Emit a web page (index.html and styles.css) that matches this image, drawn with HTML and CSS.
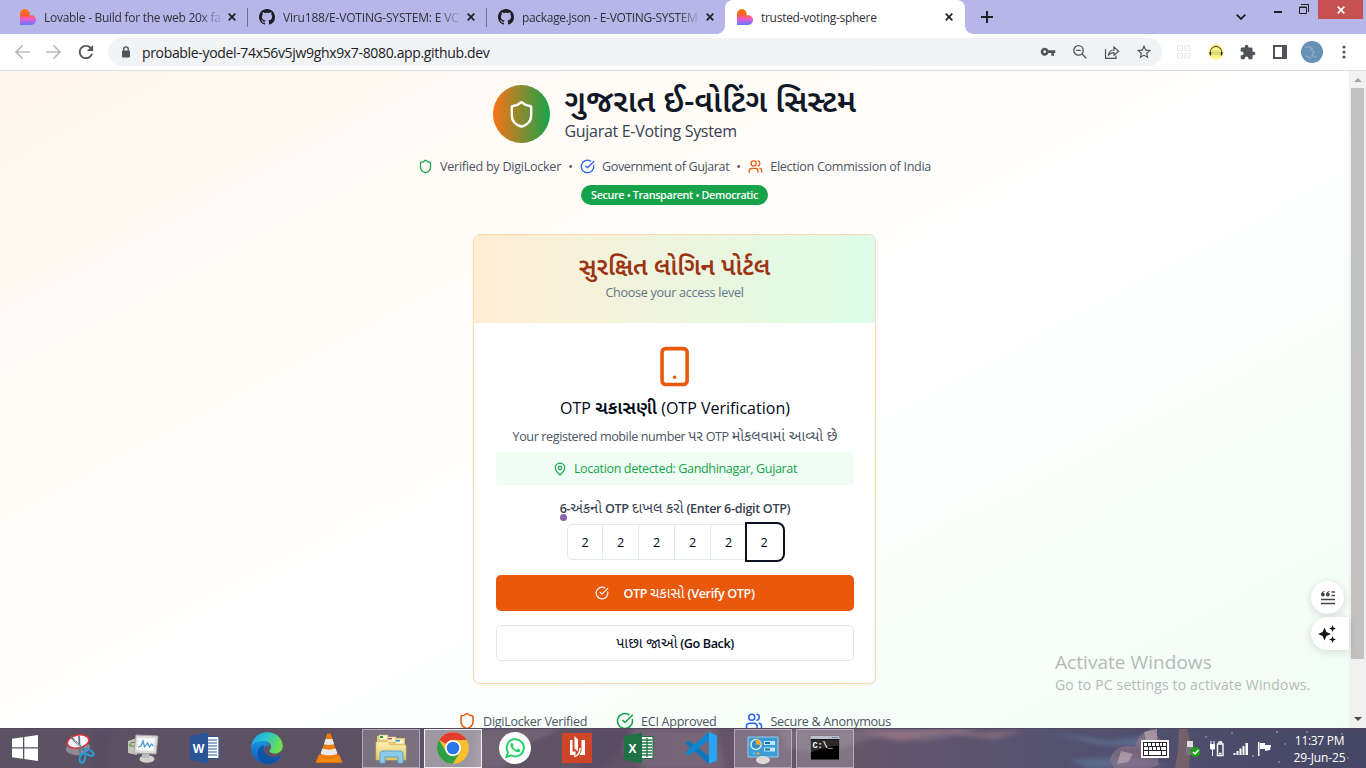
FILE: index.html
```html
<!DOCTYPE html>
<html lang="en">
<head>
<meta charset="utf-8">
<title>trusted-voting-sphere</title>
<link rel="stylesheet" href="styles.css">
</head>
<body>
<svg class="defs" width="0" height="0">
  <defs>
    <linearGradient id="lov" x1="0" y1="0" x2="0" y2="1"><stop offset="0" stop-color="#ff7a00"/><stop offset=".4" stop-color="#ff5a3c"/><stop offset=".62" stop-color="#f05ad0"/><stop offset="1" stop-color="#5a78ff"/></linearGradient>
    <linearGradient id="edgeA" x1="0" y1="0" x2="1" y2=".3"><stop offset="0" stop-color="#1d9be8"/><stop offset=".5" stop-color="#2bc3d2"/><stop offset="1" stop-color="#6be04e"/></linearGradient>
    <linearGradient id="edgeB" x1="0" y1="0" x2="0" y2="1"><stop offset="0" stop-color="#1b95e0"/><stop offset="1" stop-color="#0a5cc0"/></linearGradient>
    <linearGradient id="folder" x1="0" y1="0" x2="0" y2="1"><stop offset="0" stop-color="#fdf3b4"/><stop offset="1" stop-color="#e2c263"/></linearGradient>
  </defs>
  <symbol id="heart" viewBox="0 0 16 16"><path fill="url(#lov)" d="M0 4.8a4.8 4.8 0 0 1 9.6 0v1.4h1.6a4.9 4.9 0 0 1 0 9.8H0z"/></symbol>
  <symbol id="github" viewBox="0 0 16 16"><path fill="#1b1f23" d="M8 0C3.58 0 0 3.58 0 8c0 3.54 2.29 6.53 5.47 7.59.4.07.55-.17.55-.38 0-.19-.01-.82-.01-1.49-2.01.37-2.53-.49-2.69-.94-.09-.23-.48-.94-.82-1.13-.28-.15-.68-.52-.01-.53.63-.01 1.08.58 1.23.82.72 1.21 1.87.87 2.33.66.07-.52.28-.87.51-1.07-1.78-.2-3.64-.89-3.64-3.95 0-.87.31-1.59.82-2.15-.08-.2-.36-1.02.08-2.12 0 0 .67-.21 2.2.82.64-.18 1.32-.27 2-.27.68 0 1.36.09 2 .27 1.53-1.04 2.2-.82 2.2-.82.44 1.1.16 1.92.08 2.12.51.56.82 1.27.82 2.15 0 3.07-1.87 3.75-3.65 3.95.29.25.54.73.54 1.48 0 1.07-.01 1.93-.01 2.2 0 .21.15.46.55.38A8.013 8.013 0 0016 8c0-4.42-3.58-8-8-8z"/></symbol>
  <symbol id="x" viewBox="0 0 8 8"><path d="M.7.7l6.6 6.6M7.3.7L.7 7.3" stroke="currentColor" stroke-width="1.7" fill="none"/></symbol>
  <symbol id="shield" viewBox="0 0 24 24"><path d="M20 13c0 5-3.5 7.5-7.66 8.95a1 1 0 0 1-.67-.01C7.5 20.5 4 18 4 13V6a1 1 0 0 1 1-1c2 0 4.5-1.2 6.24-2.72a1.17 1.17 0 0 1 1.52 0C14.51 3.81 17 5 19 5a1 1 0 0 1 1 1z"/></symbol>
  <symbol id="check" viewBox="0 0 24 24"><path d="M21.801 10A10 10 0 1 1 17 3.335M9 11l3 3L22 4"/></symbol>
  <symbol id="users" viewBox="0 0 24 24"><path d="M16 21v-2a4 4 0 0 0-4-4H6a4 4 0 0 0-4 4v2M22 21v-2a4 4 0 0 0-3-3.87M16 3.13a4 4 0 0 1 0 7.75"/><circle cx="9" cy="7" r="4"/></symbol>
</svg>

<div class="screen">
  <div class="tabs">
    <div class="tab"><svg class="fav"><use href="#heart"/></svg><span class="ttl t1">Lovable - Build for the web 20x fa</span><svg class="cls"><use href="#x"/></svg></div>
    <div class="tab sep"><svg class="fav"><use href="#github"/></svg><span class="ttl t2">Viru188/E-VOTING-SYSTEM: E VC</span><svg class="cls"><use href="#x"/></svg></div>
    <div class="tab sep"><svg class="fav"><use href="#github"/></svg><span class="ttl t3">package.json - E-VOTING-SYSTEM</span><svg class="cls"><use href="#x"/></svg></div>
    <div class="tab active"><svg class="fav"><use href="#heart"/></svg><span class="ttl t4">trusted-voting-sphere</span><svg class="cls"><use href="#x"/></svg></div>
    <svg class="plus" viewBox="0 0 12 12"><path d="M6 0v12M0 6h12" stroke="#202124" stroke-width="2"/></svg>
    <div class="winctl">
      <svg class="chev" viewBox="0 0 10 6"><path d="M.7.7L5 5 9.300.7" fill="none" stroke="#202124" stroke-width="1.8"/></svg>
      <i class="min"></i>
      <svg class="max" viewBox="0 0 10 10"><path d="M.5 3h7v6.500h-7zM.5 3.500h7M2 .5h7.500V8" fill="none" stroke="#202124"/></svg>
      <div class="close"><svg viewBox="0 0 8 8"><use href="#x"/></svg></div>
    </div>
  </div>

  <div class="toolbar">
    <div class="nav">
      <svg viewBox="2 2 20 20" fill="#b8babd"><path d="M22 11H6.800l6.600-6.600L12 3l-9 9 9 9 1.400-1.400L6.800 13H22z"/></svg>
      <svg viewBox="2 2 20 20" fill="#b8babd"><path d="M2 11h15.200l-6.600-6.600L12 3l9 9-9 9-1.400-1.400 6.600-6.600H2z"/></svg>
      <svg viewBox="3 3 18 18" fill="#505357" class="reload"><path d="M17.650 6.350C16.200 4.900 14.210 4 12 4c-4.420 0-7.990 3.580-7.990 8s3.570 8 7.990 8c3.730 0 6.840-2.550 7.730-6h-2.080c-.82 2.330-3.040 4-5.650 4-3.310 0-6-2.690-6-6s2.690-6 6-6c1.660 0 3.140.69 4.220 1.780L13 11h7V4l-2.350 2.350z"/></svg>
    </div>
    <div class="omni">
      <svg class="lock" viewBox="0 0 10 12"><rect x="1" y="4.500" width="8" height="7" rx="1" fill="#505357"/><path d="M2.800 5V3a2.200 2.200 0 0 1 4.400 0v2" fill="none" stroke="#505357" stroke-width="1.300"/></svg>
      <span class="url">probable-yodel-74x56v5jw9ghx9x7-8080.app.github.dev</span>
      <div class="acts">
        <svg viewBox="0 0 24 24"><path d="M12.650 10C11.830 7.670 9.610 6 7 6c-3.310 0-6 2.690-6 6s2.690 6 6 6c2.610 0 4.830-1.670 5.650-4H17v4h4v-4h2v-4H12.650zM7 14c-1.100 0-2-.9-2-2s.9-2 2-2 2 .9 2 2-.9 2-2 2z" transform="translate(0 -.5)"/></svg>
        <svg viewBox="0 0 16 16"><path d="M6.500 1.700a4.700 4.700 0 1 0 0 9.400 4.700 4.700 0 0 0 0-9.400zM10 10l4.300 4.300M4.300 6.400h4.400" fill="none" stroke="#505357" stroke-width="1.300"/></svg>
        <svg viewBox="0 0 16 16"><path d="M1.500 5v9.300H12V11.500M4.500 11c.5-3.500 2.500-5 5.500-5V3l4.700 4.300L10 11.300V8.700C7.500 8.700 6 9.500 4.500 11z" fill="none" stroke="#505357" stroke-width="1.200"/></svg>
        <svg viewBox="1 1 22 22"><path d="M22 9.240l-7.190-.62L12 2 9.190 8.630 2 9.240l5.460 4.730L5.820 21 12 17.270 18.180 21l-1.630-7.030L22 9.240zM12 15.400l-3.760 2.270 1-4.280-3.320-2.880 4.380-.38L12 6.100l1.710 4.040 4.380.38-3.320 2.880 1 4.280L12 15.400z"/></svg>
      </div>
    </div>
    <div class="exts">
      <svg viewBox="0 0 16 16" fill="none" stroke="#e6e6e6" stroke-width="1"><path d="M1.500 1.500h5v5h-5zM9 1.500h5v5H9zM1.500 9h5v5h-5zM9 9h5v5H9zM3 3l2 2M12.500 3l-2 2M3 12.500l2-2M12.500 12.500l-2-2"/></svg>
      <svg viewBox="0 0 16 16"><circle cx="8" cy="8" r="7.800" fill="#fbf48c"/><path d="M2.500 9.500V7.500a5.500 5 0 0 1 11 0v2" fill="none" stroke="#3d3b2a"/><path d="M1.200 8h2v3.500h-1.200zM12.800 8h2l-.8 3.500h-1.200z" fill="#222"/><path d="M4 8h8M4 10h8" stroke="#b5a94d" stroke-dasharray="1.500 .7"/></svg>
      <svg viewBox="1 0 23 23" fill="#505357"><path d="M20.500 11H19V7c0-1.100-.9-2-2-2h-4V3.500C13 2.120 11.880 1 10.500 1S8 2.120 8 3.500V5H4c-1.100 0-1.990.9-1.990 2v3.800H3.500c1.490 0 2.700 1.210 2.700 2.700s-1.210 2.700-2.700 2.700H2V20c0 1.100.9 2 2 2h3.800v-1.500c0-1.490 1.210-2.700 2.700-2.700 1.490 0 2.700 1.210 2.700 2.700V22H17c1.100 0 2-.9 2-2v-4h1.500c1.380 0 2.500-1.120 2.500-2.500S21.880 11 20.500 11z"/></svg>
      <svg viewBox="0 0 16 16"><path d="M2 2h12v12H2z" fill="none" stroke="#505357" stroke-width="2"/><path d="M10 2h4v12h-4z" fill="#505357"/></svg>
      <svg viewBox="0 0 22 22" class="ava"><circle cx="11" cy="11" r="11" fill="#6890b4"/><path d="M4 6c3-1 5 0 8 2M9 8l4 3-2 4 5 1M5 15c2 0 3 1 5 3" stroke="#a9c4dc" stroke-width="1.500" fill="none" opacity=".5"/></svg>
      <svg viewBox="0 0 16 16" fill="#505357"><circle cx="8" cy="3" r="1.600"/><circle cx="8" cy="8" r="1.600"/><circle cx="8" cy="13" r="1.600"/></svg>
    </div>
  </div>

  <div class="view">
    <main class="page">
      <header class="brand">
        <div class="logo"><svg class="ln"><use href="#shield"/></svg></div>
        <div><h1>ગુજરાત ઈ-વોટિંગ સિસ્ટમ</h1><p>Gujarat E-Voting System</p></div>
      </header>
      <div class="meta">
        <svg class="ln green"><use href="#shield"/></svg><span class="m1">Verified by DigiLocker</span><b>•</b>
        <svg class="ln blue"><use href="#check"/></svg><span class="m2">Government of Gujarat</span><b>•</b>
        <svg class="ln orange"><use href="#users"/></svg><span class="m3">Election Commission of India</span>
      </div>
      <div class="badge"><span>Secure • Transparent • Democratic</span></div>

      <section class="card">
        <div class="chead"><h2>સુરક્ષિત લોગિન પોર્ટલ</h2><p>Choose your access level</p></div>
        <div class="cbody">
          <svg class="phone ln" viewBox="0 0 24 24"><rect x="5" y="2" width="14" height="20" rx="2"/><path d="M12 18h.01"/></svg>
          <h3>OTP <span class="gu">ચકાસણી</span> (OTP Verification)</h3>
          <p class="sent">Your registered mobile number <span class="gu">પર</span> OTP <span class="gu">મોકલવામાં આવ્યો છે</span></p>
          <div class="loc"><svg class="ln" viewBox="0 0 24 24"><path d="M20 10c0 4.993-5.539 10.193-7.399 11.799a1 1 0 0 1-1.202 0C9.539 20.193 4 14.993 4 10a8 8 0 0 1 16 0"/><circle cx="12" cy="10" r="3"/></svg><span>Location detected: Gandhinagar, Gujarat</span></div>
          <label class="lbl"><i class="dot"></i>6-<span class="gu">અંકનો</span> OTP <span class="gu">દાખલ કરો</span> (Enter 6-digit OTP)</label>
          <div class="otp"><i>2</i><i>2</i><i>2</i><i>2</i><i>2</i><i class="on">2</i></div>
          <div class="btn primary"><svg class="ln"><use href="#check"/></svg><span>OTP <span class="gu">ચકાસો</span> (Verify OTP)</span></div>
          <div class="btn plain"><span><span class="gu">પાછા જાઓ</span> (Go Back)</span></div>
        </div>
      </section>

      <footer class="trust">
        <div><svg class="ln orange"><use href="#shield"/></svg><span class="f1">DigiLocker Verified</span></div>
        <div><svg class="ln green"><use href="#check"/></svg><span class="f2">ECI Approved</span></div>
        <div><svg class="ln blue"><use href="#users"/></svg><span class="f3">Secure &amp; Anonymous</span></div>
      </footer>
    </main>
    <div class="scroll"><i class="up"></i><div class="thumb"></div><i class="down"></i></div>
    <div class="float round"><svg viewBox="0 0 16 16"><path d="M1 9.500h14M1 13.500h14M11.500 2H15M11.500 5.500H15" stroke="#444" stroke-width="1.400"/><path d="M4.500 1C2 1.500 1 3 1 4.500a1.900 1.900 0 1 0 2-1.700c.3-.5.800-.9 1.500-1.100zM9.500 1C7 1.500 6 3 6 4.500a1.900 1.900 0 1 0 2-1.700c.3-.5.800-.9 1.500-1.100z" fill="#444"/></svg></div>
    <div class="float pill"><svg viewBox="0 0 18 18"><path d="M6.500 2.500l1.900 4.600L13 9l-4.600 1.900L6.500 15.500l-1.900-4.600L0 9l4.600-1.900zM14.500 0l1 2.500 2.500 1-2.500 1-1 2.500-1-2.500-2.500-1 2.500-1zM14.500 11l1 2.500 2.500 1-2.500 1-1 2.500-1-2.500-2.500-1 2.500-1z" fill="#171717"/></svg></div>
    <div class="activate"><p class="a1">Activate Windows</p><p class="a2">Go to PC settings to activate Windows.</p></div>
  </div>

  <div class="taskbar">
    <svg class="wall" viewBox="0 0 1366 40" preserveAspectRatio="none">
      <defs><filter id="soft" x="-5%" y="-50%" width="110%" height="200%"><feGaussianBlur stdDeviation="3 2"/></filter></defs>
      <g filter="url(#soft)">
      <g fill="#4a4058" opacity=".3"><path d="M95 0h18l-6 40h-15zM590 0h45l-15 25-18 15h-22z"/></g>
      <g fill="#a08a9d" opacity=".3"><path d="M480 0h80l-30 14-28 26h-30zM635 0h80l10 40h-80l-22-20zM780 0h200l-50 12-58-3-45 15-40-4z"/></g>
      <path d="M860 2l40 10 45-8 50 6 28-8h-15l-30 2-18-4z" fill="#a78089" opacity=".5"/>
      <path d="M1050 3l60 9 35-5 15 12-60-3zM1070 31l60-4 40 10-80 3z" fill="#6682a4" opacity=".5"/>
      </g>
      <path d="M1110 30c6-14 15-14 25-12 2-10 8-16 17-18l8 10c4 12-4 17-1 26l-12 4h-32z" fill="#a77d8d" opacity=".45"/>
      <path d="M1144 3l13-3v12l-7 5-4-4zM1121 22l12 3-5 8-11 2z" fill="#c4b2bd" opacity=".6"/>
      <path d="M1179 0h8l4 14-2 26h-14l3-20z" fill="#8e6c69" opacity=".6"/>
      <g fill="#b9bed5"><circle cx="1206" cy="8" r=".7"/><circle cx="1232" cy="4" r=".7"/><circle cx="1253" cy="27" r=".8"/><circle cx="1277" cy="3" r=".8"/><circle cx="1285" cy="15" r=".7"/><circle cx="1307" cy="3" r=".7"/><circle cx="1342" cy="5" r=".8"/><circle cx="1279" cy="33" r=".7"/><circle cx="1348" cy="29" r=".7"/></g>
    </svg>
    <div class="apps">
      <div class="start"><svg viewBox="0 0 26 26" fill="#fff"><path d="M0 3.800L11 2.200V12.300H0zM12.300 2L26 0v12.300H12.300zM0 13.500h11v10.300L0 22.200zM12.300 13.500H26V26l-13.700-2z"/></svg></div>
      <div class="app"><svg viewBox="0 0 32 32"><ellipse cx="13" cy="16" rx="12" ry="7" fill="#8f8796" transform="rotate(-8 13 16)"/><ellipse cx="13" cy="9.500" rx="11" ry="6.500" fill="#f4f4fb" stroke="#d8323c" stroke-width="1.600" transform="rotate(-12 13 9.500)"/><path d="M6 5l14 14M14 4l1 17" stroke="#6b7480" stroke-width="1.800"/><path d="M9 7l6 8" stroke="#d4dae0"/><g fill="none" stroke="#289bd8" stroke-width="2"><ellipse cx="24" cy="20.500" rx="5" ry="2.500" transform="rotate(28 24 20.500)"/><ellipse cx="17.500" cy="26" rx="2.600" ry="4.700" transform="rotate(15 17.500 26)"/></g></svg></div>
      <div class="app"><svg viewBox="0 0 32 32"><path d="M1 9l9-3v17l-9-2z" fill="#c5c5bc"/><path d="M3 11l6-1M3 14h6" stroke="#6b6b66"/><circle cx="3" cy="13" r="1.200" fill="#4cc23a"/><path d="M9 3l22 1-2 18-22-1z" fill="#deded7" stroke="#aaa"/><path d="M11 6l17 .5-1.500 12.500L9.500 18z" fill="#f6fbff"/><path d="M11 15l3-1 2-5 1.500 6 3-4 2 4 2-3 2 2" fill="none" stroke="#3f96c9" stroke-width="1.200"/><ellipse cx="20" cy="27" rx="7.500" ry="3.800" fill="#d1d1cd"/><path d="M15 22h7v4h-7z" fill="#bbb"/></svg></div>
      <div class="app"><svg viewBox="0 0 32 32"><path d="M17 4.500h13v22H17z" fill="#fff" stroke="#2b579a" stroke-width="1.200"/><path d="M18 8h10M18 11h10M18 14h10M18 17h10M18 20h10M18 23h10" stroke="#2b579a" stroke-width="1.200"/><path d="M1 4l18-3.500v31L1 28z" fill="#2a5699"/><text x="9.600" y="20.500" class="wx">W</text></svg></div>
      <div class="app"><svg viewBox="0 0 32 32"><path d="M16 31.800C7 31.800.2 25 .2 16c0-5 4-8.500 9-8.500 6 0 9 4 9 7-3-2-6 1-6 4 0 5 5 8.500 10 8.500 3 0 5.500-1.500 6.500-2.500 1 0 1.200.7.800 1.200-2.500 3.600-7.500 6.100-13.500 6.100z" fill="url(#edgeB)"/><path d="M.3 15C1 6 8 .2 16 .2c10 0 15.800 7 15.800 13.800 0 5-4 7.500-7.800 7.500-3.700 0-5.500-1.500-5.500-2.500s1.500-1.500 1.500-4.500c0-3-3.300-5.500-7.500-5.500C7 9 2 11 .3 15z" fill="url(#edgeA)"/><path d="M13.500 13c-4.500 1-7 4.500-7 8.500 0 5 4 9.500 8.500 10.300 6 .5 12-2.300 14.800-7.300.3-.8-.4-1.200-1-.8-6 3.300-14.300.8-16-4.700-.6-2.300-.3-4.500.7-6z" fill="#0b54a8"/></svg></div>
      <div class="app"><svg viewBox="0 0 32 32"><path d="M6 23h20l3 7.500H3z" fill="#f58a10" stroke="#e27106"/><path d="M14.300 1.500h3.400L25 25c-4 2.700-14 2.700-18 0z" fill="#f07c0a"/><path d="M12.600 7h6.800l1.700 5.200c-3 1-7.200 1-10.200 0zM9.300 16.500c4 1.500 9.400 1.500 13.400 0l1.700 5.300c-5 2-11.800 2-16.800 0z" fill="#e9e9ec"/></svg></div>
      <div class="app box"><svg viewBox="0 0 32 32"><path d="M2 4h10l2 2h16v20H2z" fill="#e9cc73"/><path d="M4 3h9v5H4zM12 5h9v5h-9zM20 7h9v5h-9z" fill="#fff8d8" stroke="#d5ba62" stroke-width=".6"/><path d="M5 4h3v2H5z" fill="#27a23a"/><path d="M13 6h4v1.500h-4z" fill="#d3503a"/><path d="M21 8h4v1.500h-4z" fill="#2c88d8"/><path d="M1 10h12l2 3h16v15H1z" fill="url(#folder)" stroke="#d9bd60" stroke-width=".6"/><path d="M5 31v-9q0-3 3-3h17q3 0 3 3v9h-5v-6H10v6z" fill="#8dcbe9" stroke="#5ba7cd"/></svg></div>
      <div class="app box cur"><svg viewBox="0 0 32 32"><circle cx="16" cy="16" r="15.800" fill="#fbc02d"/><path d="M2.300 8.100A15.800 15.800 0 0 1 29.700 8.100H16a7.900 7.900 0 0 0-6.800 4z" fill="#e33b2e"/><path d="M2.300 8.100l6.900 11.900A7.900 7.900 0 0 0 18 23.600L16 31.800A15.800 15.800 0 0 1 2.300 8.100z" fill="#2c9f47"/><path d="M16 31.800l6.900-11.900L18 23z" fill="#2c9f47"/><circle cx="16" cy="16" r="8" fill="#fff"/><circle cx="16" cy="16" r="6.300" fill="#2a76e8"/></svg></div>
      <div class="app"><svg viewBox="0 0 32 32"><circle cx="16" cy="16" r="16" fill="#fff"/><path d="M7.500 25l1.400-4.800A8.600 8.600 0 1 1 12.300 23.400z" fill="none" stroke="#27cf68" stroke-width="2"/><path d="M13 10.800c-.8 0-1.600 1-1.600 2.200 0 3 4.600 7.300 7.600 7.300 1.500 0 2.500-1 2.500-2.300l-2.800-1.500-1.300 1.400c-1.500-.6-2.900-2-3.600-3.500l.9-1.200z" fill="#27cf68"/></svg></div>
      <div class="app"><svg viewBox="0 0 32 32"><path d="M1 1h30v30H1z" fill="#cf4527"/><path d="M9 8h2.500v11.500h3V23H9zM13.500 4l3.500 3.500v12l-3.500-3zM20.500 8H24v15h-5.500l2-4z" fill="#fff"/><path d="M13 24.500q6-1 6-8.500" fill="none" stroke="#fff" stroke-width="1.500"/></svg></div>
      <div class="app"><svg viewBox="0 0 32 32"><path d="M17 4.500h13v22H17z" fill="#fff" stroke="#217346" stroke-width="1.200"/><path d="M19 8h10M19 11h10M19 14h10M19 17h10M19 20h10M19 23h10M24 6v19" stroke="#217346" stroke-width="1.300"/><path d="M1 4l18-3.500v31L1 28z" fill="#1f7244"/><text x="9.600" y="20.500" class="wx">X</text></svg></div>
      <div class="app"><svg viewBox="0 0 32 32"><path d="M24 0l8 3.500v25L24 32 0 11.200 3.500 8.500 24 24z" fill="#1077bd"/><path d="M24 0L0 20.800 3.500 23.500 24 8z" fill="#0b87d2"/><path d="M24 0l8 3.500v25L24 32z" fill="#27a5f2"/></svg></div>
      <div class="app box"><svg viewBox="0 0 32 32"><path d="M1 5h30v20H1z" fill="#3e9bd4" stroke="#98cdeb"/><circle cx="9" cy="12.500" r="5" fill="#348cc5" stroke="#d8edf8" stroke-width="1.400"/><path d="M9 12.500V7a5.500 5.500 0 0 1 5 6z" fill="#f5a623"/><path d="M17 9h11v4H17zM17 15.500h11v4H17z" fill="#bfe7f8"/><path d="M18 10h5v2h-5zM18 16.500h5v2h-5z" fill="#1c6ea8"/><circle cx="7" cy="21.500" r="1.300" fill="#54c4f5"/><circle cx="11" cy="21.500" r="1.300" fill="#f5a623"/><ellipse cx="16" cy="28" rx="7" ry="4" fill="#d9d9d7"/></svg></div>
      <div class="app box"><svg viewBox="0 0 32 32"><path d="M1.500 4h29v24h-29z" fill="#000" stroke="#777"/><path d="M1.500 4h29v3h-29z" fill="#b9c1cd"/><path d="M2 7.500h28v6c-10 1-18 3-28 7z" fill="#2a2a2a"/><path d="M23 5.500h6" stroke="#3d5a9a" stroke-dasharray="1.200 1"/><text x="3.500" y="15.500" class="cmd">C:\_</text></svg></div>
    </div>
    <div class="tray">
      <svg class="kb" viewBox="0 0 28 18"><path d="M0 0h28v18H0z" fill="#fff"/><path d="M2 2h24v14H2z" fill="#26232f"/><path d="M3 3h3v3H3zM7 3h3v3H7zM11 3h3v3h-3zM15 3h3v3h-3zM19 3h2v3h-2zM22 3h3v3h-3zM3 7h4v3H3zM8 7h3v3H8zM12 7h3v3h-3zM16 7h3v3h-3zM20 7h5v3h-5zM3 11h4v4H3zM8 11h12v4H8zM21 11h4v4h-4z" fill="#fff"/></svg>
      <svg class="usb" viewBox="0 0 16 16"><path d="M2 0h6v6H2z" fill="#ddd"/><path d="M1 6h8v8H1z" fill="#77757c"/><circle cx="10.500" cy="11" r="5" fill="#1fa01b"/><path d="M8 11l2 2 3.500-4" fill="none" stroke="#fff" stroke-width="1.500"/></svg>
      <svg class="bat" viewBox="0 0 16 16"><path d="M8.500 3h5.500v11.500H8.500zM10 1h2.500v2H10zM10 12.500h2.500" fill="none" stroke="#fff" stroke-width="1.400"/><path d="M1 3h5v4q0 1-1 1.500H4V15H3V8.500H2q-1-.5-1-1.500zM1.500 0h1v3h-1zM4.500 0h1v3h-1z" fill="#fff"/></svg>
      <svg class="sig" viewBox="0 0 16 14"><path d="M.5 11h2v2h-2zM3.500 9h2v4h-2zM6.500 6.500h2V13h-2zM9.500 4h2v9h-2zM12.500 1h2.500v12h-2.500z" fill="#fff"/></svg>
      <svg class="flag" viewBox="0 0 16 16"><path d="M1 1h1.500v14H1zM3 2h5v2h6l-1 5-5 1V8H3z" fill="#fff"/></svg>
      <div class="clock"><span class="c1">11:37 PM</span><span class="c2">29-Jun-25</span></div>
    </div>
  </div>
</div>
</body>
</html>
```
FILE: styles.css
```css
* { box-sizing: border-box; }
body, h1, h2, h3, p { margin: 0; }
i { font-style: normal; }
svg { display: block; flex: none; }
.defs { position: absolute; }
body { font-family: "Open Sans", "Noto Sans", "Noto Sans Gujarati", sans-serif; overflow: hidden; }
.screen { width: 1366px; height: 768px; display: flex; flex-direction: column; }
span, p, h1, h2, h3, label { white-space: nowrap; }

/* Tab strip */
.tabs { height: 34px; background: #b6b6e8; display: flex; position: relative; }
.tab { width: 239px; padding: 0 12px 0 11px; display: flex; align-items: center; position: relative; font-size: 12px; color: #303138; }
.tab:first-child { width: 248px; padding-left: 20px; }
.fav { width: 16px; height: 16px; margin-right: 8px; }
.ttl { width: 176px; flex: none; }
.t1 { letter-spacing: -.28px; }
.t2 { letter-spacing: -.18px; }
.t3 { letter-spacing: -.32px; }
.t4 { letter-spacing: -.28px; }
.tab:not(.active) .ttl { -webkit-mask-image: linear-gradient(90deg, #000 88%, rgba(0,0,0,.15)); mask-image: linear-gradient(90deg, #000 88%, rgba(0,0,0,.15)); }
.cls { width: 8px; height: 8px; margin-left: 8px; color: #202124; }
.sep::before { content: ""; position: absolute; left: -1px; top: 8px; width: 1px; height: 19px; background: #70708f; }
.active { width: 240px; background: #fff; border-radius: 8px 8px 0 0; padding-left: 12px; margin-left: -1px; }
.active::before, .active::after { content: ""; position: absolute; bottom: 0; width: 8px; height: 8px; background: radial-gradient(circle at 0 0, transparent 7.500px, #fff 8px); }
.active::before { left: -8px; }
.active::after { right: -8px; transform: scaleX(-1); }
.plus { width: 12px; height: 12px; margin: 11px 0 0 16px; }
.winctl { margin-left: auto; display: flex; align-items: flex-start; padding-right: 3px; }
.chev { width: 10px; height: 6px; margin: 14px 28px 0 0; }
.min { width: 8px; height: 2px; background: #202124; margin: 11px 17px 0 0; }
.max { width: 10px; height: 10px; margin: 4px 9px 0 0; }
.close { width: 45px; height: 19px; background: #c75050; color: #fff; display: grid; place-items: center; }
.close svg { width: 8px; height: 8px; }

/* Toolbar */
.toolbar { height: 37px; background: #fff; border-bottom: 1px solid #d9dadd; display: flex; align-items: center; padding: 0 14px; }
.nav { display: flex; gap: 16px; width: 94px; }
.nav svg { width: 16px; height: 16px; }
.omni { width: 1054px; height: 28px; border-radius: 14px; background: #f1f3f4; display: flex; align-items: center; padding: 0 10px 0 13px; }
.lock { width: 10px; height: 12px; }
.url { font-size: 14px; color: #202124; margin: 0 0 0 11px; letter-spacing: -.34px; }
.acts { display: flex; gap: 16px; margin-left: auto; fill: #505357; }
.acts svg, .exts svg { width: 16px; height: 16px; }
.exts { display: flex; align-items: center; gap: 16px; margin-left: 14px; }
.exts .ava { width: 22px; height: 22px; margin: 0 -3px; }

/* Web page */
.view { height: 657px; display: flex; position: relative; overflow: hidden; }
.page { width: 1349px; height: 716px; background: linear-gradient(to bottom right, #fff7ed, #fff 50%, #f0fdf4); display: flex; flex-direction: column; align-items: center; }
.ln { fill: none; stroke: currentColor; stroke-width: 2; stroke-linecap: round; stroke-linejoin: round; }
.green { color: #16a34a; }
.blue { color: #2563eb; }
.orange { color: #ea580c; }
.gu { font-size: 1.14em; font-weight: 400; letter-spacing: 0; line-height: 1; }
.brand { display: flex; gap: 15px; height: 72px; padding-top: 14px; }
.logo { width: 57px; height: 58px; border-radius: 50%; background: linear-gradient(90deg, #f97316, #16a34a); display: grid; place-items: center; color: #fff; }
.logo svg { width: 29px; height: 29px; }
.brand h1 { font-size: 31.300px; line-height: 31px; height: 33px; color: #111827; width: 292px; font-weight: 600; }
.brand p { font-size: 16px; line-height: 26px; color: #374151; letter-spacing: -.3px; }
.meta { display: flex; align-items: center; height: 22px; margin-top: 12px; font-size: 12.600px; color: #4b5563; }
.meta svg { width: 15px; height: 15px; margin-right: 7px; }
.meta b { width: 19px; text-align: center; font-weight: 400; }
.meta .m1 { letter-spacing: -.27px; }
.meta .m2 { letter-spacing: -.42px; }
.meta .m3 { letter-spacing: -.31px; }
.badge { width: 187px; height: 20px; border-radius: 10px; background: #16a34a; color: #fff; font-size: 10.800px; font-weight: 600; line-height: 20px; text-align: center; margin-top: 8px; }
.badge span { letter-spacing: -.36px; }

/* Login card */
.card { width: 403px; height: 450px; margin-top: 29px; border: 1px solid #fed7aa; border-radius: 7px; background: #fff; box-shadow: 0 1px 2px rgba(0,0,0,.05); overflow: hidden; text-align: center; }
.chead { height: 88px; background: linear-gradient(90deg, #ffedd5, #dcfce7); padding-top: 14px; }
.chead h2 { font-size: 24.200px; line-height: 33px; height: 35px; color: #9a3412; font-weight: 600; }
.chead p { font-size: 12.600px; line-height: 18px; color: #64748b; letter-spacing: -.3px; }
.cbody { padding: 22px 21px 0 22px; display: flex; flex-direction: column; }
.phone { width: 43.200px; height: 43px; align-self: center; color: #ea580c; margin-right: 1.500px; }
.cbody h3 { font-size: 16px; line-height: 25px; height: 25px; margin-top: 8px; font-weight: 500; color: #020817; }
.cbody h3 .gu { font-weight: 600; }
.sent { font-size: 12.600px; line-height: 18px; height: 18px; color: #4b5563; margin-top: 7px; letter-spacing: -.4px; }
.loc { height: 33px; margin-top: 6px; background: #f0fdf4; border-radius: 4px; color: #16a34a; display: flex; align-items: center; justify-content: center; gap: 7px; font-size: 12.600px; letter-spacing: -.38px; }
.loc svg { width: 14px; height: 14px; }
.lbl { font-size: 12.600px; line-height: 18px; height: 18px; margin-top: 15px; color: #374151; font-weight: 600; letter-spacing: -.33px; align-self: center; position: relative; }
.dot { position: absolute; left: 0; top: 14px; width: 7px; height: 7px; border-radius: 50%; background: #8b65ab; }
.otp { display: flex; align-self: center; margin-top: 6px; }
.otp i { width: 36px; height: 36px; border: 1px solid #e2e8f0; border-left-width: 0; font-size: 12.600px; line-height: 36px; color: #020817; }
.otp i:first-child { border-left-width: 1px; border-radius: 6px 0 0 6px; }
.otp .on { border: 0; border-radius: 0 6px 6px 0; box-shadow: 0 0 0 2px #0b1120; line-height: 38px; padding-right: 2px; }
.btn { height: 36px; border-radius: 5px; display: flex; align-items: center; justify-content: center; font-size: 12.600px; line-height: 18px; font-weight: 600; letter-spacing: -.4px; }
.btn > span { padding-top: 1px; }
.primary { background: #ea580c; color: #fff; margin-top: 15px; gap: 14px; letter-spacing: -.36px; }
.btn svg { width: 14px; height: 14px; }
.plain { border: 1px solid #e2e8f0; margin-top: 14px; color: #020817; letter-spacing: -.4px; }
.trust { display: flex; gap: 29px; margin-top: 28px; font-size: 12.600px; color: #4b5563; letter-spacing: -.3px; }
.trust div { display: flex; align-items: center; gap: 7px; }
.trust svg { width: 18px; height: 18px; }

/* Scrollbar and overlays */
.scroll { width: 17px; background: #f1f1f1; display: flex; flex-direction: column; align-items: center; height: 657px; }
.up, .down { border: 4px solid transparent; }
.up { border-bottom-color: #a3a3a3; border-top: 0; margin: 7px 0 6px; }
.down { border-top-color: #505050; border-bottom: 0; margin-top: 58px; }
.thumb { width: 13px; height: 571px; background: #c1c1c1; }
.float { position: absolute; background: #fff; box-shadow: 0 2px 8px rgba(0,0,0,.14); display: flex; align-items: center; }
.round { left: 1311px; top: 510px; width: 33px; height: 33px; border-radius: 50%; justify-content: center; }
.round svg { width: 16px; height: 16px; }
.pill { left: 1311px; top: 546px; width: 38px; height: 33px; border-radius: 17px 0 0 17px; padding-left: 7px; }
.pill svg { width: 18px; height: 18px; }
.activate { position: absolute; left: 1055px; top: 578px; color: #b5bab6; }
.a1 { font-size: 19px; line-height: 27px; letter-spacing: .05px; }
.a2 { font-size: 14px; line-height: 18px; letter-spacing: .16px; }

/* Taskbar */
.taskbar { height: 40px; position: relative; background: linear-gradient(90deg, #5c5263 0, #5d5264 35%, #645368 50%, #665669 62%, #565371 76%, #454765 100%); display: flex; justify-content: space-between; border-top: 1px solid #514860; overflow: hidden; }
.wall { position: absolute; left: 0; top: 0; width: 1366px; height: 40px; }
.apps, .tray { display: flex; position: relative; }
.start { width: 52px; padding: 6px 0 0 12px; }
.start svg { width: 26px; height: 26px; }
.app { width: 58px; height: 39px; margin-right: 4px; padding-bottom: 1px; display: grid; place-items: center; border: 1px solid transparent; }
.app svg { width: 32px; height: 32px; }
.box { background: rgba(255,255,255,.18); border-color: rgba(255,255,255,.4); }
.cur { background: rgba(255,255,255,.4); border-color: rgba(255,255,255,.85); }
.wx { font: 700 12px "Open Sans", sans-serif; fill: #fff; text-anchor: middle; }
.cmd { font: 700 8.500px "Liberation Mono", monospace; fill: #fff; }
.tray { align-items: center; padding-right: 20px; }
.kb { width: 28px; height: 18px; margin-right: 16px; }
.usb { width: 16px; height: 16px; margin-right: 8px; }
.bat { width: 16px; height: 16px; margin-right: 8px; }
.sig { width: 16px; height: 14px; margin-right: 8px; }
.flag { width: 16px; height: 16px; margin-right: 20px; }
.clock { width: 53px; display: flex; flex-direction: column; align-items: center; font-size: 12px; line-height: 17px; color: #fff; }
.clock span { letter-spacing: -.3px; }
.clock .c2 { letter-spacing: -.15px; }
```
